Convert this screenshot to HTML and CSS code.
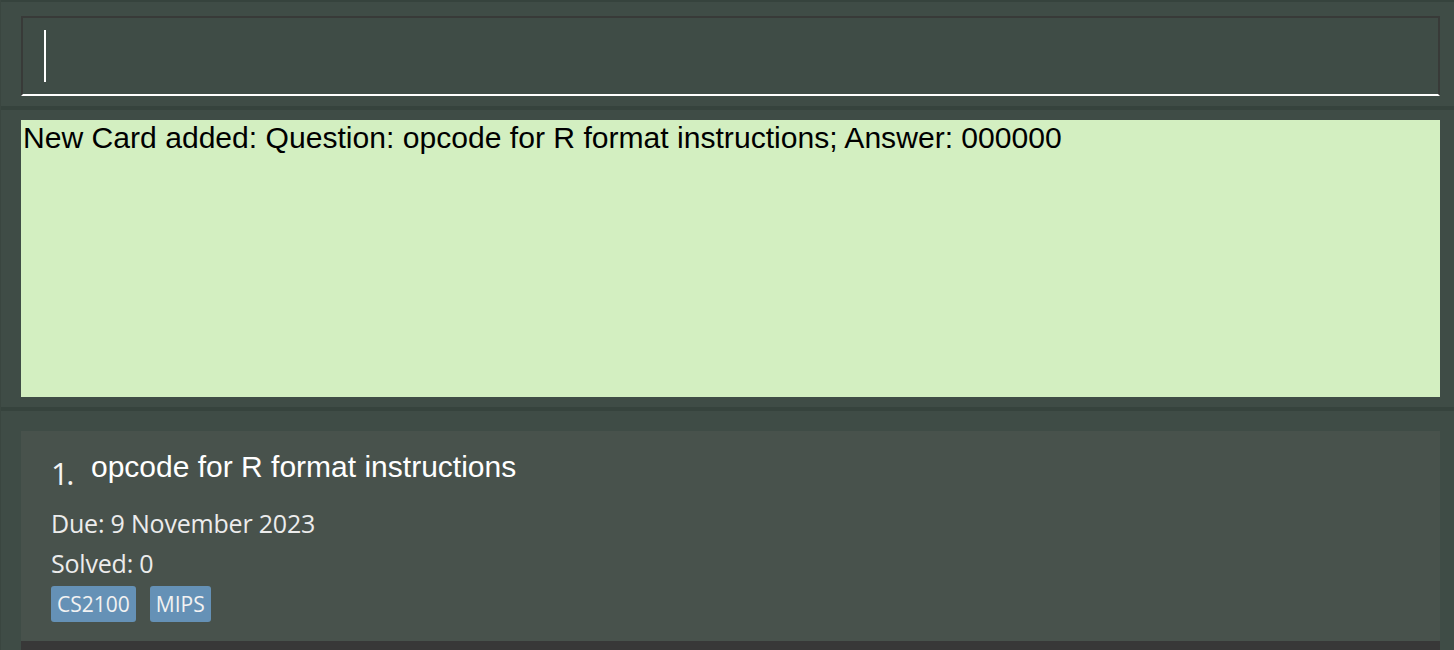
FILE: index.html
```html
<!DOCTYPE html>
<html>
<head>
<meta charset="utf-8">
<link rel="stylesheet" href="styles.css">
</head>
<body>
<div class="app">
  <div class="band"></div>
  <section class="command">
    <div class="input"><span class="caret"></span></div>
  </section>
  <div class="sep"></div>
  <section class="result">
    <div class="result-box">New Card added: Question: opcode for R format instructions; Answer: 000000</div>
  </section>
  <div class="sep"></div>
  <section class="list">
    <div class="card">
      <div class="card-head">
        <span class="index">1.</span>
        <span class="question">opcode for R format instructions</span>
      </div>
      <div class="meta">Due: 9 November 2023</div>
      <div class="meta">Solved: 0</div>
      <div class="tags">
        <span class="tag">CS2100</span>
        <span class="tag">MIPS</span>
      </div>
    </div>
    <div class="list-rest"></div>
  </section>
</div>
</body>
</html>
```
FILE: styles.css
```css
html, body {
  margin: 0;
  padding: 0;
  height: 100%;
  overflow: hidden;
}
body {
  background: #3f4c46;
}
.app {
  display: flex;
  flex-direction: column;
  height: 650px;
  border-left: 1px solid #3a4640;
}
.band {
  height: 2px;
  background: #36433d;
}
.command {
  padding: 14px 14px 10px 20px;
}
.input {
  border: 2px solid #383a38;
  border-bottom: 2px solid #ffffff;
  padding: 12px 0 0 21px;
  box-sizing: border-box;
  height: 80px;
}
.caret {
  display: block;
  width: 2px;
  height: 52px;
  background: #ffffff;
}
.sep {
  height: 4px;
  background: #36433d;
}
.result {
  padding: 10px 14px 10px 20px;
}
.result-box {
  height: 277px;
  background: #d3efc1;
  color: #000;
  font-family: "Liberation Sans", Arial, sans-serif;
  font-size: 30.1px;
  line-height: 34px;
  padding: 1px 0 0 2px;
  box-sizing: border-box;
}
.list {
  padding: 20px 14px 0 20px;
  flex: 1;
  display: flex;
  flex-direction: column;
}
.card {
  background: #48524c;
  height: 210px;
  box-sizing: border-box;
  padding: 20px 30px 0 30px;
  color: #ececec;
  font-family: "Open Sans", "Noto Sans", sans-serif;
}
.card-head {
  display: flex;
  align-items: flex-start;
  height: 52px;
}
.index {
  font-size: 31px;
  line-height: 32px;
  margin-top: 6px;
  width: 40px;
  color: #f4f4f4;
  letter-spacing: -2.5px;
}
.question {
  font-family: "Liberation Sans", Arial, sans-serif;
  font-size: 30px;
  line-height: 32px;
  color: #ffffff;
}
.meta {
  font-size: 25px;
  line-height: 40px;
  letter-spacing: -0.2px;
}
.tags {
  display: flex;
  gap: 14px;
  margin-top: 3px;
}
.tag {
  background: #6591b6;
  color: #f2f2f2;
  border-radius: 3px;
  font-size: 21px;
  line-height: 36px;
  padding: 0 6px;
}
.list-rest {
  flex: 1;
  background: #383838;
}
```
